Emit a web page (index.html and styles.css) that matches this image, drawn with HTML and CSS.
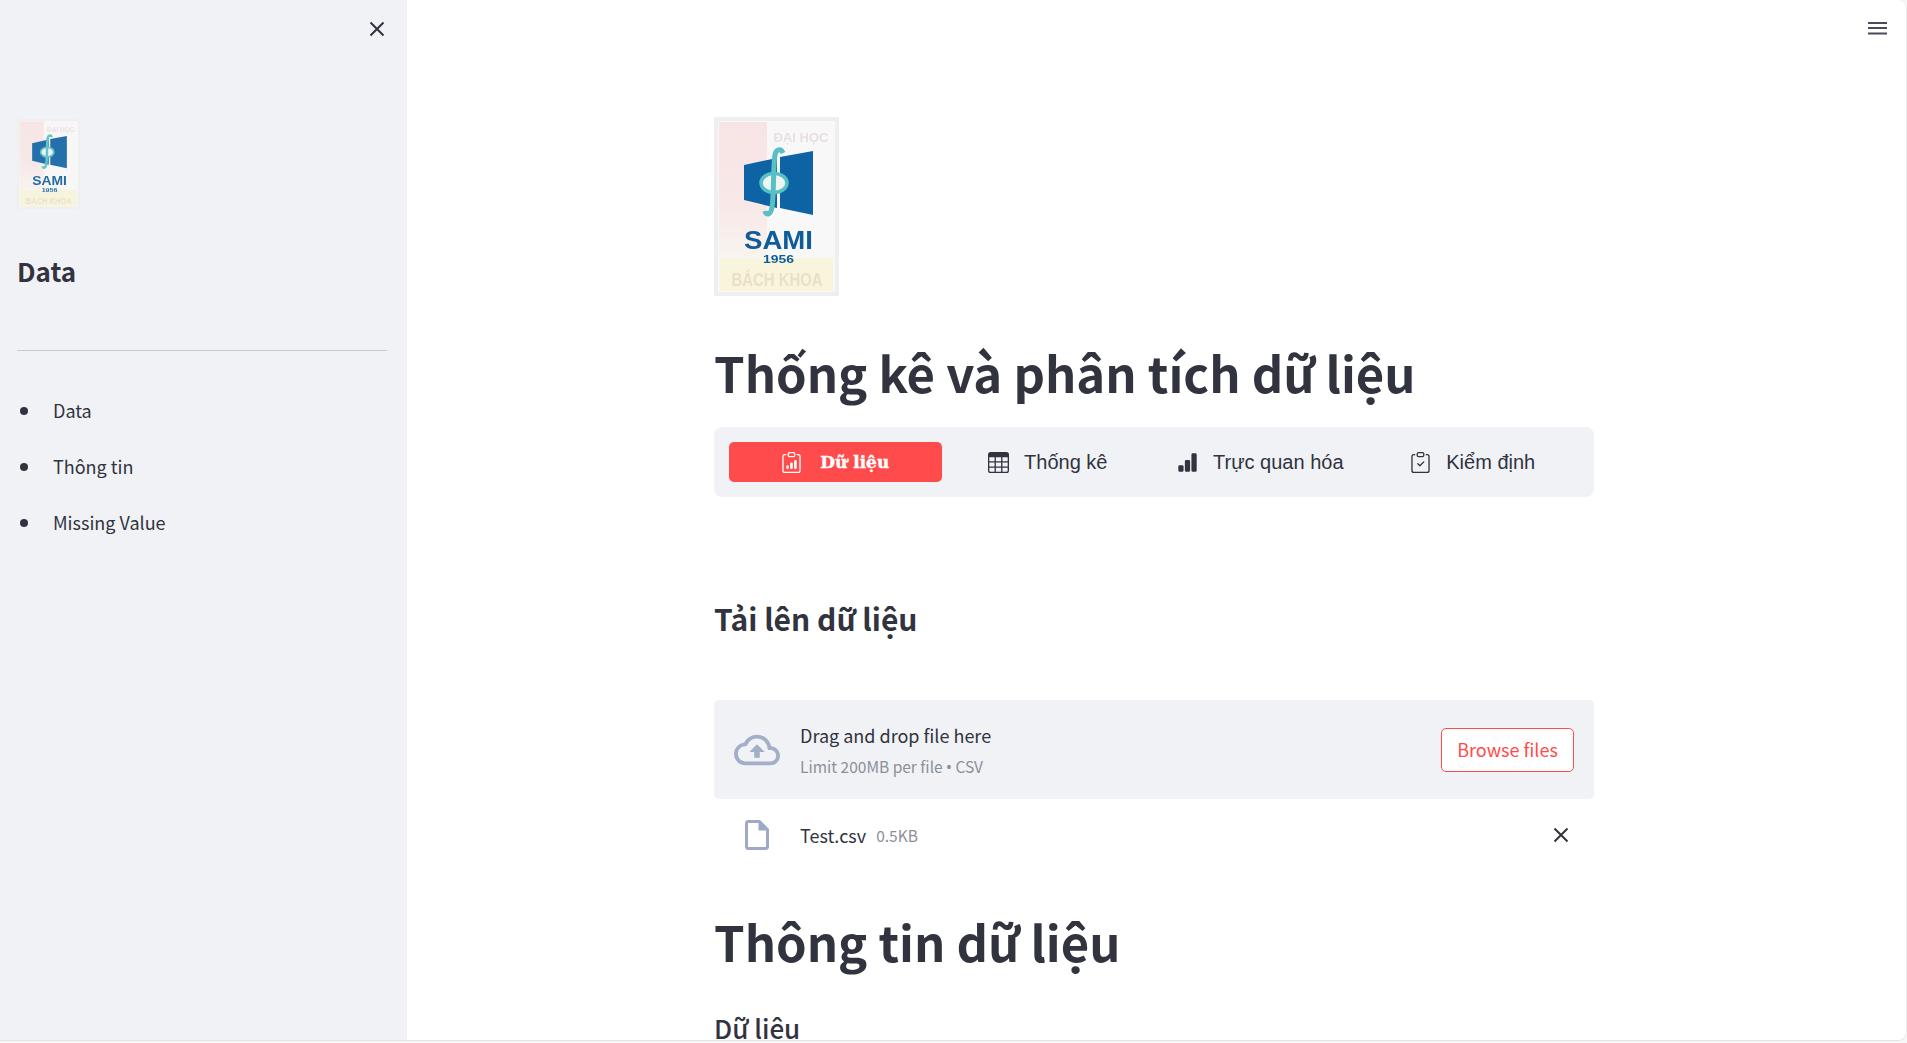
FILE: index.html
```html
<!DOCTYPE html>
<html lang="vi">
<head>
<meta charset="utf-8">
<title>Thống kê và phân tích dữ liệu</title>
<link rel="stylesheet" href="styles.css">
</head>
<body>
<div class="app">
  <aside class="sidebar">
    <button class="side-close" aria-label="Close sidebar">
      <svg viewBox="0 0 16 16" width="16" height="16"><path d="M1.5 1.5l13 13M14.5 1.5l-13 13" class="x-stroke"/></svg>
    </button>
    <svg class="logo logo-small" viewBox="0 0 125 179" aria-label="SAMI logo"><use href="#sami"/></svg>
    <h2 class="side-title">Data</h2>
    <hr class="side-rule">
    <ul class="side-list">
      <li>Data</li>
      <li>Thông tin</li>
      <li>Missing Value</li>
    </ul>
  </aside>
  <main class="main">
    <button class="menu" aria-label="Menu">
      <svg viewBox="0 0 19 14" width="19" height="14"><path d="M0 2h19M0 7h19M0 12.5h19" class="menu-stroke"/></svg>
    </button>
    <div class="content">
      <svg class="logo logo-big" viewBox="0 0 125 179" aria-label="SAMI logo">
        <defs>
          <linearGradient id="fade" x1="0" y1="0" x2="0" y2="1"><stop offset="0" stop-color="#f8e4e4"/><stop offset=".6" stop-color="#f8e8e8"/><stop offset="1" stop-color="#f8f4ee"/></linearGradient>
          <g id="sami">
            <rect width="125" height="179" fill="#efefef"/>
            <rect x="4" y="4" width="117" height="171" fill="#f8f8f8"/>
            <rect x="5" y="5" width="48" height="135" fill="url(#fade)"/>
            <rect x="6" y="141" width="113" height="33" fill="#f8f5dc"/>
            <path d="M28 22l2 .8-1 1.8-2.400 0-1-1.800z" fill="#f8efc0"/>
            <text x="87" y="25" class="logo-top">ĐẠI HỌC</text>
            <path d="M30 48L63 41V91L30 83ZM66 40L99 34V98L66 91Z" fill="#0e63a5"/>
            <ellipse cx="60" cy="66" rx="13" ry="9.500" fill="#eef5f2" stroke="#58c0c4" stroke-width="3.500"/>
            <path d="M69 36C67 31 62 32 61 38C59 48 60 80 58 90C57 98 52 99 51 94" fill="none" stroke="#58c0c4" stroke-width="5"/>
            <text x="64.500" y="132" class="logo-word" textLength="69" lengthAdjust="spacingAndGlyphs">SAMI</text>
            <text x="64.500" y="146" class="logo-year" textLength="31" lengthAdjust="spacingAndGlyphs">1956</text>
            <text x="63" y="169" class="logo-band" textLength="91" lengthAdjust="spacingAndGlyphs">BÁCH KHOA</text>
          </g>
        </defs>
        <use href="#sami"/>
      </svg>
      <h1 class="title">Thống kê và phân tích dữ liệu</h1>
      <nav class="tabs">
        <a class="tab tab-active">
          <svg class="tab-icon" viewBox="0 0 16 16" fill="currentColor"><path d="M4 11a1 1 0 1 1 2 0v1a1 1 0 1 1-2 0v-1zm6-4a1 1 0 1 1 2 0v5a1 1 0 1 1-2 0V7zM7 9a1 1 0 0 1 2 0v3a1 1 0 1 1-2 0V9z"/><path d="M4 1.500H3a2 2 0 0 0-2 2V14a2 2 0 0 0 2 2h10a2 2 0 0 0 2-2V3.500a2 2 0 0 0-2-2h-1v1h1a1 1 0 0 1 1 1V14a1 1 0 0 1-1 1H3a1 1 0 0 1-1-1V3.500a1 1 0 0 1 1-1h1v-1z"/><path d="M9.500 1a.5.5 0 0 1 .5.5v1a.5.5 0 0 1-.5.5h-3a.5.5 0 0 1-.5-.5v-1a.5.5 0 0 1 .5-.5h3zm-3-1A1.500 1.500 0 0 0 5 1.500v1A1.500 1.500 0 0 0 6.500 4h3A1.500 1.500 0 0 0 11 2.500v-1A1.500 1.500 0 0 0 9.500 0h-3z"/></svg>
          <span class="tab-bold">Dữ liệu</span>
        </a>
        <a class="tab">
          <svg class="tab-icon" viewBox="0 0 16 16" fill="currentColor"><path d="M0 2a2 2 0 0 1 2-2h12a2 2 0 0 1 2 2v12a2 2 0 0 1-2 2H2a2 2 0 0 1-2-2V2zm15 2h-4v3h4V4zm0 4h-4v3h4V8zm0 4h-4v3h3a1 1 0 0 0 1-1v-2zm-5 3v-3H6v3h4zm-5 0v-3H1v2a1 1 0 0 0 1 1h3zm-4-4h4V8H1v3zm0-4h4V4H1v3zm5-3v3h4V4H6zm4 4H6v3h4V8z"/></svg>
          <span>Thống kê</span>
        </a>
        <a class="tab">
          <svg class="tab-icon" viewBox="0 0 16 16" fill="currentColor"><path d="M1 11a1 1 0 0 1 1-1h2a1 1 0 0 1 1 1v3a1 1 0 0 1-1 1H2a1 1 0 0 1-1-1v-3zm5-4a1 1 0 0 1 1-1h2a1 1 0 0 1 1 1v7a1 1 0 0 1-1 1H7a1 1 0 0 1-1-1V7zm5-5a1 1 0 0 1 1-1h2a1 1 0 0 1 1 1v12a1 1 0 0 1-1 1h-2a1 1 0 0 1-1-1V2z"/></svg>
          <span>Trực quan hóa</span>
        </a>
        <a class="tab">
          <svg class="tab-icon" viewBox="0 0 16 16" fill="currentColor"><path d="M10.854 7.146a.5.5 0 0 1 0 .708l-3 3a.5.5 0 0 1-.708 0l-1.500-1.500a.5.5 0 1 1 .708-.708L7.500 9.793l2.646-2.647a.5.5 0 0 1 .708 0z"/><path d="M4 1.500H3a2 2 0 0 0-2 2V14a2 2 0 0 0 2 2h10a2 2 0 0 0 2-2V3.500a2 2 0 0 0-2-2h-1v1h1a1 1 0 0 1 1 1V14a1 1 0 0 1-1 1H3a1 1 0 0 1-1-1V3.500a1 1 0 0 1 1-1h1v-1z"/><path d="M9.500 1a.5.5 0 0 1 .5.5v1a.5.5 0 0 1-.5.5h-3a.5.5 0 0 1-.5-.5v-1a.5.5 0 0 1 .5-.5h3zm-3-1A1.500 1.500 0 0 0 5 1.500v1A1.500 1.500 0 0 0 6.500 4h3A1.500 1.500 0 0 0 11 2.500v-1A1.500 1.500 0 0 0 9.500 0h-3z"/></svg>
          <span>Kiểm định</span>
        </a>
      </nav>
      <h3 class="section">Tải lên dữ liệu</h3>
      <section class="drop">
        <svg class="cloud" viewBox="0 0 24 24"><path d="M19.350 10.040A7.490 7.490 0 0 0 12 4C9.110 4 6.600 5.640 5.350 8.040A5.994 5.994 0 0 0 0 14c0 3.310 2.690 6 6 6h13c2.760 0 5-2.240 5-5 0-2.640-2.050-4.780-4.650-4.960zM19 18H6c-2.210 0-4-1.790-4-4 0-2.050 1.530-3.760 3.560-3.970l1.070-.11.5-.95A5.469 5.469 0 0 1 12 6c2.620 0 4.880 1.860 5.390 4.430l.3 1.500 1.530.11A2.980 2.980 0 0 1 22 15c0 1.650-1.350 3-3 3zM8 13h2.550v3h2.900v-3H16l-4-4z" fill="#a3aec9"/></svg>
        <div class="drop-text">
          <div class="drop-main">Drag and drop file here</div>
          <div class="drop-sub">Limit 200MB per file <span class="dot">•</span> CSV</div>
        </div>
        <button class="browse">Browse files</button>
      </section>
      <div class="file">
        <svg class="file-icon" viewBox="0 0 24 24"><path d="M14 2H6c-1.100 0-2 .9-2 2v16c0 1.100.9 2 2 2h12c1.100 0 2-.9 2-2V8l-6-6zM6 20V4h7v5h5v11H6z" fill="#9da9c6"/></svg>
        <span class="file-name">Test.csv</span>
        <span class="file-size">0.5KB</span>
        <svg class="file-x" viewBox="0 0 16 16" width="16" height="16"><path d="M1.500 1.500l13 13M14.500 1.500l-13 13" class="x-stroke"/></svg>
      </div>
      <h1 class="title title-second">Thông tin dữ liệu</h1>
      <h3 class="section-light">Dữ liệu</h3>
    </div>
  </main>
</div>
</body>
</html>
```
FILE: styles.css
```css
* { box-sizing: border-box; }
html, body { margin: 0; height: 100%; overflow: hidden; background: #f7f7f7; }
body { font-family: "Noto Sans CJK SC", "Noto Sans", sans-serif; color: #31333f; }
.app { display: flex; height: 1040px; width: 1906px; overflow: hidden; background: #fff; border-radius: 0 8px 8px 0; box-shadow: 0 1px 0 #e3e3e3, 1px 0 0 #ececec; }
.sidebar { width: 407px; flex: none; background: #f0f2f6; padding: 119px 20px 0 17px; position: relative; }
.side-close { position: absolute; top: 21px; left: 369px; width: 16px; height: 16px; padding: 0; border: 0; background: none; }
.x-stroke { stroke: #31333f; stroke-width: 2; fill: none; }
.logo { display: block; filter: blur(.5px); }
.logo-small { width: 63px; height: 90px; opacity: .9; }
.logo-big { width: 125px; height: 179px; }
.logo-word { font: 700 26px "Liberation Sans", sans-serif; fill: #0e5c9c; text-anchor: middle; }
.logo-year { font: 700 11px "Liberation Sans", sans-serif; fill: #0e5c9c; text-anchor: middle; }
.logo-top { font: 700 13px "Liberation Sans", sans-serif; fill: #eadfe0; text-anchor: middle; }
.logo-band { font: 700 18px "Liberation Sans", sans-serif; fill: #eadfc8; text-anchor: middle; }
.side-title { margin: 42px 0 0; font-size: 26px; line-height: 40px; font-weight: 600; }
.side-rule { margin: 59px 0 0; border: 0; border-top: 1px solid #c9cbd2; width: 370px; }
.side-list { list-style: none; margin: 45px 0 0; padding: 0; }
.side-list li { font-size: 18px; line-height: 28px; margin-bottom: 28px; padding-left: 36px; position: relative; }
.side-list li::before { content: ""; position: absolute; left: 3px; top: 11px; width: 8px; height: 8px; border-radius: 50%; background: #31333f; }
.main { flex: 1; position: relative; }
.menu { position: absolute; top: 21px; left: 1461px; width: 19px; height: 14px; padding: 0; border: 0; background: none; }
.menu-stroke { stroke: #4a4c59; stroke-width: 2; }
.content { margin-left: 307px; width: 880px; padding-top: 117px; }
.title { margin: 43px 0 0; font-size: 49px; line-height: 66px; font-weight: 700; }
.tabs { display: flex; align-items: center; margin-top: 22px; height: 70px; background: #f0f2f6; border-radius: 8px; padding: 0 15px; font-family: "Liberation Sans", sans-serif; font-size: 20px; color: #31333f; }
.tab { display: flex; align-items: center; justify-content: center; gap: 15px; height: 40px; width: 213px; border-radius: 5px; }
.tab-active { background: #ff4b4b; color: #fff; gap: 18px; }
.tab-bold { font-family: "DejaVu Serif", serif; font-size: 17px; font-weight: 700; -webkit-text-stroke: .4px #fff; }
.tab-icon { width: 21px; height: 21px; flex: none; }
.section { margin: 101px 0 0; font-size: 30px; line-height: 40px; font-weight: 600; }
.drop { display: flex; align-items: center; margin-top: 62px; height: 99px; background: #f0f2f6; border-radius: 5px; padding: 0 20px; }
.cloud { width: 46px; height: 46px; flex: none; }
.drop-text { margin-left: 20px; flex: 1; }
.drop-main { font-size: 18px; line-height: 28px; }
.drop-sub { font-size: 15.500px; line-height: 24px; margin-top: 5px; color: #8c8f99; }
.dot { font-family: "Noto Sans", sans-serif; }
.browse { width: 133px; height: 44px; padding: 0 0 2px; border: 1px solid #ff4b4b; border-radius: 5px; background: #fff; color: #ff4b4b; font: inherit; font-size: 18px; }
.file { display: flex; align-items: center; height: 36px; margin-top: 18px; padding-left: 25px; position: relative; }
.file-icon { width: 36px; height: 36px; flex: none; }
.file-name { margin-left: 25px; font-size: 18px; }
.file-size { margin-left: 10px; font-size: 15.500px; color: #8c8f99; }
.file-x { position: absolute; left: 839px; top: 10px; }
.title-second { margin-top: 55px; }
.section-light { margin: 36px 0 0; font-size: 26px; line-height: 36px; font-weight: 500; }
```
